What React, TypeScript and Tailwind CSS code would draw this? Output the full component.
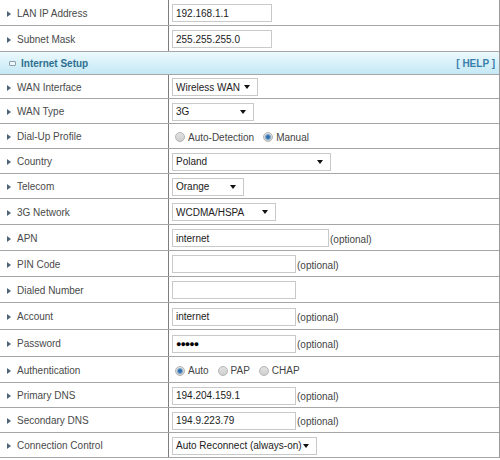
import React from "react";

type Row =
  | { kind: "input"; label: string; value?: string; w: number; h: number; optional?: boolean; password?: boolean }
  | { kind: "select"; label: string; value: string; w: number; h: number }
  | { kind: "radio"; label: string; options: { text: string; on: boolean }[]; h: number };

const topRows: Row[] = [
  { kind: "input", label: "LAN IP Address", value: "192.168.1.1", w: 100, h: 26 },
  { kind: "input", label: "Subnet Mask", value: "255.255.255.0", w: 100, h: 26 },
];

const internetRows: Row[] = [
  { kind: "select", label: "WAN Interface", value: "Wireless WAN", w: 86, h: 24 },
  { kind: "select", label: "WAN Type", value: "3G", w: 82, h: 25 },
  {
    kind: "radio",
    label: "Dial-Up Profile",
    options: [
      { text: "Auto-Detection", on: false },
      { text: "Manual", on: true },
    ],
    h: 25,
  },
  { kind: "select", label: "Country", value: "Poland", w: 159, h: 25 },
  { kind: "select", label: "Telecom", value: "Orange", w: 72, h: 25 },
  { kind: "select", label: "3G Network", value: "WCDMA/HSPA", w: 104, h: 26 },
  { kind: "input", label: "APN", value: "internet", w: 157, h: 26, optional: true },
  { kind: "input", label: "PIN Code", value: "", w: 124, h: 26, optional: true },
  { kind: "input", label: "Dialed Number", value: "", w: 124, h: 26 },
  { kind: "input", label: "Account", value: "internet", w: 124, h: 27, optional: true },
  { kind: "input", label: "Password", value: "●●●●●", w: 124, h: 27, optional: true, password: true },
  {
    kind: "radio",
    label: "Authentication",
    options: [
      { text: "Auto", on: true },
      { text: "PAP", on: false },
      { text: "CHAP", on: false },
    ],
    h: 26,
  },
  { kind: "input", label: "Primary DNS", value: "194.204.159.1", w: 124, h: 25, optional: true },
  { kind: "input", label: "Secondary DNS", value: "194.9.223.79", w: 124, h: 25, optional: true },
  { kind: "select", label: "Connection Control", value: "Auto Reconnect (always-on)", w: 145, h: 25 },
];

function Radio({ on }: { on: boolean }) {
  return (
    <span className="relative flex h-[10px] w-[10px] items-center justify-center rounded-full border border-[#b4b4b4] bg-gradient-to-b from-[#e2e2e2] to-[#cfcfcf]">
      {on && (
        <span className="h-[6px] w-[6px] rounded-full border border-[#7fa9cf] bg-[#2f6fae]" />
      )}
    </span>
  );
}

function Control({ row }: { row: Row }) {
  if (row.kind === "input") {
    return (
      <div className="flex items-center">
        <div
          className="flex h-[18px] items-center border border-[#c9c9c9] bg-white pl-[3px] pt-[1px] text-[#222]"
          style={{ width: row.w }}
        >
          {row.password ? (
            <span className="text-[9px] tracking-[-1px] text-black">{row.value}</span>
          ) : (
            row.value
          )}
        </div>
        {row.optional && <span className="ml-[1px] pt-[3px] text-[#444]">(optional)</span>}
      </div>
    );
  }
  if (row.kind === "select") {
    return (
      <div
        className="flex h-[18px] items-center justify-between border border-[#c9c9c9] bg-white pl-[3px] pr-[7px] text-[#222]"
        style={{ width: row.w }}
      >
        <span className="pt-[1px]">{row.value}</span>
        <span className="h-0 w-0 border-x-[3px] border-t-[4px] border-x-transparent border-t-[#111]" />
      </div>
    );
  }
  return (
    <div className="flex items-center pl-[3px] pt-[1px] text-[#444]">
      {row.options.map((o, i) => (
        <span key={o.text} className={`flex items-center ${i > 0 ? "ml-[9px]" : ""}`}>
          <Radio on={o.on} />
          <span className="ml-[3px] pt-[1px]">{o.text}</span>
        </span>
      ))}
    </div>
  );
}

function FormRow({ row }: { row: Row }) {
  return (
    <div className="flex border-b border-[#a6a6a6]" style={{ height: row.h }}>
      <div className="flex w-[169px] items-center border-r border-[#7d7d7d] pl-[7px] pt-[2px] text-[#4a4a4a]">
        <span className="h-0 w-0 border-y-[3px] border-l-[4px] border-y-transparent border-l-[#4f6478]" />
        <span className="ml-[6px]">{row.label}</span>
      </div>
      <div className="flex flex-1 items-center pl-[3px] pt-[1px]">
        <Control row={row} />
      </div>
    </div>
  );
}

export default function App() {
  return (
    <div className="h-[460px] w-[500px] overflow-hidden bg-white font-['Liberation_Sans',Arial,sans-serif] text-[10px] leading-none">
      <div className="border-r border-[#9a9a9a]">
        {topRows.map((r) => (
          <FormRow key={r.label} row={r} />
        ))}
        <div className="flex h-[23px] items-center justify-between border-b border-[#a6a6a6] bg-gradient-to-b from-[#ecf9fd] to-[#c4e8f5] pl-[9px] pr-[4px] pt-[1px] font-bold text-[#2e6f90]">
          <div className="flex items-center">
            <span className="h-[5px] w-[7px] rounded-[1px] border border-[#8ea0ad] bg-[#eef6fa]" />
            <span className="ml-[5px]">Internet Setup</span>
          </div>
          <span className="text-[#3a7eaa]">[ HELP ]</span>
        </div>
        {internetRows.map((r) => (
          <FormRow key={r.label} row={r} />
        ))}
      </div>
    </div>
  );
}
